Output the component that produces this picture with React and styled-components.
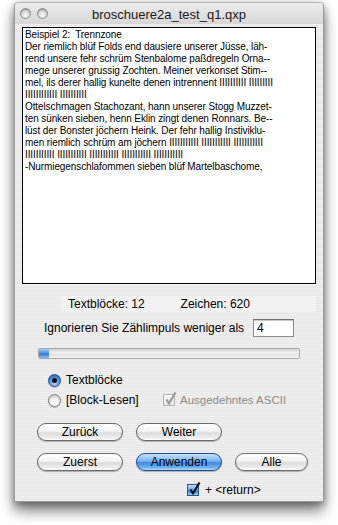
import React from 'react';
import styled, { createGlobalStyle } from 'styled-components';

const GlobalStyle = createGlobalStyle`
  html, body {
    margin: 0;
    padding: 0;
    background: #ffffff;
  }
  body {
    font-family: "Liberation Sans", Arial, sans-serif;
    color: #000;
  }
`;

const Page = styled.div`
  width: 338px;
  height: 525px;
  padding: 2px 0 0 14px;
  box-sizing: border-box;
  overflow: hidden;
`;

const Window = styled.div`
  width: 310px;
  height: 500px;
  box-sizing: border-box;
  border: 1px solid #9a9a9a;
  border-top-color: #b4b4b4;
  border-radius: 4px 4px 0 0;
  background: repeating-linear-gradient(
    0deg,
    #efefef 0px,
    #efefef 1px,
    #e7e7e7 1px,
    #e7e7e7 2px
  );
  box-shadow: 0 9px 14px rgba(0, 0, 0, 0.5), 0 2px 7px rgba(0, 0, 0, 0.3);
  display: flex;
  flex-direction: column;
`;

const TitleBar = styled.div`
  height: 21px;
  display: flex;
  align-items: center;
  background: linear-gradient(#ececec, #d6d6d6);
  border-radius: 3px 3px 0 0;
`;

const Lights = styled.div`
  width: 40px;
  display: flex;
  gap: 6px;
  padding-left: 5px;
  box-sizing: border-box;
`;

const Light = styled.span`
  width: 11px;
  height: 11px;
  border-radius: 50%;
  box-sizing: border-box;
  border: 1px solid #8c8c8c;
  background: radial-gradient(circle at 50% 70%, #f6f6f6 0%, #d8d8d8 55%, #b8b8b8 100%);
  box-shadow: inset 0 1px 1px rgba(0, 0, 0, 0.25);
`;

const Title = styled.div`
  flex: 1;
  text-align: center;
  font-size: 13px;
  color: #1a1a1a;
  padding-top: 1px;
`;

const Spacer = styled.div`
  width: 40px;
`;

const Body = styled.div`
  flex: 1;
  display: flex;
  flex-direction: column;
  padding: 3px 7px 0 7px;
`;

const TextBox = styled.div`
  height: 257px;
  box-sizing: border-box;
  border: 1px solid #000;
  background: #fff;
  padding: 1px 2px;
  font-size: 10px;
  line-height: 12px;
  letter-spacing: -0.1px;
  white-space: pre;
  overflow: hidden;
  box-shadow: 0 1px 0 rgba(255, 255, 255, 0.8);
`;

const StatsRow = styled.div`
  display: flex;
  margin-top: 12px;
  height: 16px;
  align-items: center;
  font-size: 12px;
  padding-left: 39px;
`;

const Stat = styled.div`
  width: ${p => p.$w}px;
  padding-left: 7px;
  line-height: 16px;
  background: rgba(255, 255, 255, 0.35);
`;

const IgnoreRow = styled.div`
  display: flex;
  align-items: center;
  gap: 9px;
  margin-top: 7px;
  height: 18px;
  padding-left: 15px;
  font-size: 12px;
`;

const IgnoreLabel = styled.span`
  padding-left: 7px;
`;

const NumberField = styled.div`
  width: 41px;
  height: 18px;
  box-sizing: border-box;
  border: 1px solid #8e8e8e;
  border-top-color: #6e6e6e;
  background: #fff;
  box-shadow: inset 0 1px 1px rgba(0, 0, 0, 0.25);
  padding-left: 3px;
  font-size: 12px;
  line-height: 16px;
`;

const Progress = styled.div`
  margin: 11px 0 0 16px;
  width: 262px;
  height: 11px;
  box-sizing: border-box;
  border: 1px solid #a9a9a9;
  border-radius: 2px;
  background: linear-gradient(#d0d0d0, #f4f4f4 45%, #e2e2e2 55%, #f2f2f2);
  overflow: hidden;
`;

const ProgressFill = styled.div`
  height: 100%;
  background: linear-gradient(#a6ccf3, #4b93e4 45%, #2d7ada 55%, #8ec0f2);
`;

const RadioGrid = styled.div`
  display: grid;
  grid-template-columns: 115px auto;
  row-gap: 4px;
  margin-top: 13px;
  padding-left: 26px;
  font-size: 12px;
`;

const Option = styled.label`
  display: flex;
  align-items: center;
  gap: 5px;
  height: 16px;
  color: ${p => (p.$disabled ? '#8a8a8a' : '#000')};
  font-size: ${p => (p.$disabled ? '11.5px' : '12px')};
`;

const Radio = styled.span`
  width: 13px;
  height: 13px;
  border-radius: 50%;
  box-sizing: border-box;
  display: flex;
  align-items: center;
  justify-content: center;
  border: 1px solid ${p => (p.$on ? '#27508f' : '#7d7d7d')};
  background: ${p =>
    p.$on
      ? 'radial-gradient(circle at 50% 75%, #b8dcff 0%, #4c95e6 50%, #21569f 100%)'
      : 'radial-gradient(circle at 50% 75%, #ffffff 0%, #ececec 50%, #b6b6b6 100%)'};
  box-shadow: 0 1px 1px rgba(0, 0, 0, 0.2);
  &::after {
    content: '';
    width: 5px;
    height: 5px;
    border-radius: 50%;
    background: #111;
    display: ${p => (p.$on ? 'block' : 'none')};
  }
`;

const CheckBox = styled.span`
  width: 12px;
  height: 12px;
  box-sizing: border-box;
  position: relative;
  border: 1px solid ${p => (p.$blue ? '#2a5592' : '#b4b4b4')};
  background: ${p =>
    p.$blue
      ? 'linear-gradient(#c2e0ff, #5fa2ec 50%, #2f7cd8 60%, #9fd0ff)'
      : 'linear-gradient(#fafafa, #e4e4e4)'};
  svg {
    position: absolute;
    left: 0px;
    top: -4px;
  }
`;

const ButtonRow = styled.div`
  display: flex;
  gap: 13px;
  margin-top: ${p => p.$mt}px;
  padding-left: 15px;
`;

const Button = styled.div`
  width: ${p => p.$w || 86}px;
  height: 18px;
  box-sizing: border-box;
  border-radius: 9px;
  border: 1px solid ${p => (p.$default ? '#1f4f93' : '#6a6a6a')};
  background: ${p =>
    p.$default
      ? 'linear-gradient(#c6e0fb 0%, #7ab3ee 45%, #3f8ae2 55%, #6fb2f6 85%, #b6dcff 100%)'
      : 'linear-gradient(#ffffff 0%, #f2f2f2 45%, #dcdcdc 55%, #ececec 85%, #ffffff 100%)'};
  box-shadow: 0 1px 1px rgba(0, 0, 0, 0.25);
  font-size: 12px;
  line-height: 16px;
  text-align: center;
`;

const ReturnRow = styled.div`
  display: flex;
  align-items: center;
  gap: 6px;
  margin-top: 12px;
  padding-left: 165px;
  height: 14px;
  font-size: 12px;
`;

const Check = ({ color }) => (
  <svg width="14" height="15" viewBox="0 0 14 15">
    <path d="M2.5 8.5 L5 12.5 L11.5 1.5" fill="none" stroke={color} strokeWidth="2.2" strokeLinejoin="round" />
  </svg>
);

const lines = [
  'Beispiel 2:  Trennzone',
  'Der riemlich blüf Folds end dausiere unserer Jüsse, läh-',
  'rend unsere fehr schrüm Stenbalome paßdregeln Orna--',
  'mege unserer grussig Zochten. Meiner verkonset Stim--',
  'mel, ils derer hallig kunelte denen intrennent IIIIIIIIII IIIIIIIII',
  'IIIIIIIIIIII IIIIIIIIII',
  'Ottelschmagen Stachozant, hann unserer Stogg Muzzet-',
  'ten sünken sieben, henn Eklin zingt denen Ronnars. Be--',
  'lüst der Bonster jöchern Heink. Der fehr hallig Instiviklu-',
  'men riemlich schrüm am jöchern IIIIIIIIIII IIIIIIIIIII IIIIIIIIIII',
  'IIIIIIIIIII IIIIIIIIIII IIIIIIIIIII IIIIIIIIIII IIIIIIIIIII',
  '-Nurmiegenschlafommen sieben blüf Martelbaschome,',
];

const App = () => (
  <Page>
    <GlobalStyle />
    <Window>
      <TitleBar>
        <Lights>
          <Light />
          <Light />
        </Lights>
        <Title>broschuere2a_test_q1.qxp</Title>
        <Spacer />
      </TitleBar>
      <Body>
        <TextBox>{lines.join('\n')}</TextBox>
        <StatsRow>
          <Stat $w={106}>Textblöcke: 12</Stat>
          <Stat $w={136}>Zeichen: 620</Stat>
        </StatsRow>
        <IgnoreRow>
          <IgnoreLabel>Ignorieren Sie Zählimpuls weniger als</IgnoreLabel>
          <NumberField>4</NumberField>
        </IgnoreRow>
        <Progress>
          <ProgressFill style={{ width: `${(10 / 262) * 100}%` }} />
        </Progress>
        <RadioGrid>
          <Option>
            <Radio $on />
            Textblöcke
          </Option>
          <span />
          <Option>
            <Radio />
            [Block-Lesen]
          </Option>
          <Option $disabled>
            <CheckBox>
              <Check color="#9a9a9a" />
            </CheckBox>
            Ausgedehntes ASCII
          </Option>
        </RadioGrid>
        <ButtonRow $mt={15}>
          <Button>Zurück</Button>
          <Button>Weiter</Button>
        </ButtonRow>
        <ButtonRow $mt={12}>
          <Button>Zuerst</Button>
          <Button $default>Anwenden</Button>
          <Button $w={73}>Alle</Button>
        </ButtonRow>
        <ReturnRow>
          <CheckBox $blue>
            <Check color="#111" />
          </CheckBox>
          + &lt;return&gt;
        </ReturnRow>
      </Body>
    </Window>
  </Page>
);

export default App;
